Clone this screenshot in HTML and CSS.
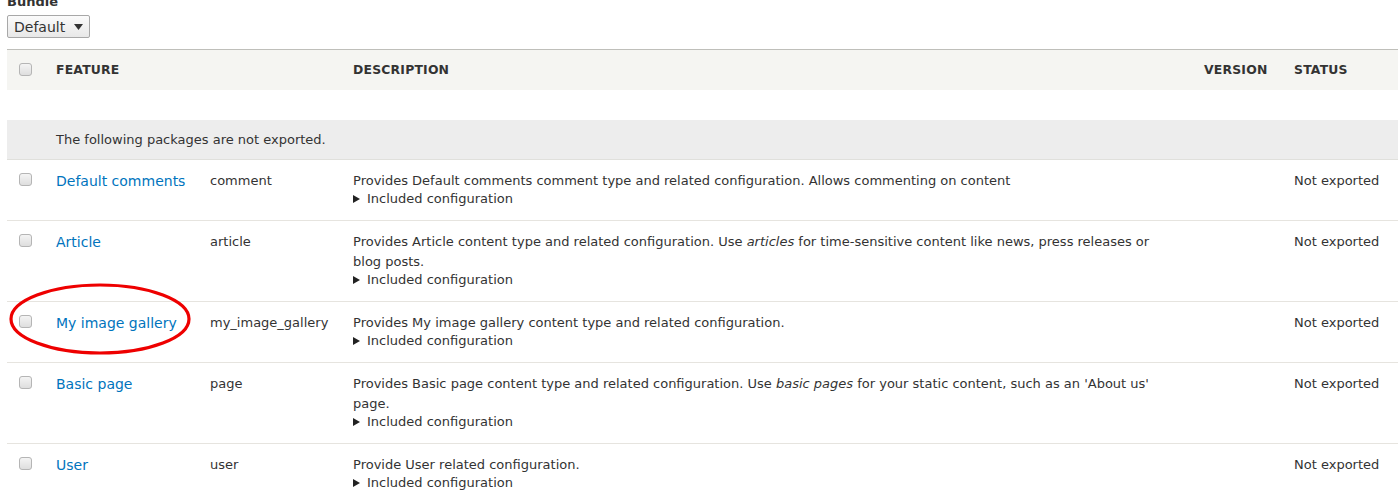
FILE: index.html
```html
<!DOCTYPE html>
<html>
<head>
<meta charset="utf-8">
<link rel="stylesheet" href="styles.css">
</head>
<body>
<div class="page">
  <div class="bundle">
    <label class="bundle-label">Bundle</label>
    <div class="select"><span>Default</span><svg class="arrow" width="9" height="6" viewBox="0 0 9 6"><path d="M0 0H9L4.5 6Z" fill="#333"/></svg></div>
  </div>
  <table class="features">
    <colgroup>
      <col class="c-check"><col class="c-feature"><col class="c-machine"><col class="c-desc"><col class="c-version"><col class="c-status">
    </colgroup>
    <thead>
      <tr>
        <th><input type="checkbox" class="cb"></th>
        <th colspan="2">Feature</th>
        <th>Description</th>
        <th>Version</th>
        <th>Status</th>
      </tr>
    </thead>
    <tbody>
      <tr class="spacer"><td colspan="6"></td></tr>
      <tr class="group"><td></td><td colspan="5">The following packages are not exported.</td></tr>
      <tr>
        <td><input type="checkbox" class="cb"></td>
        <td><a href="#">Default comments</a></td>
        <td>comment</td>
        <td><div class="desc">Provides Default comments comment type and related configuration. Allows commenting on content</div><div class="summary"><svg class="tri" width="7" height="8" viewBox="0 0 7 8"><path d="M0 0L7 4L0 8Z" fill="#222"/></svg>Included configuration</div></td>
        <td></td>
        <td>Not exported</td>
      </tr>
      <tr>
        <td><input type="checkbox" class="cb"></td>
        <td><a href="#">Article</a></td>
        <td>article</td>
        <td><div class="desc">Provides Article content type and related configuration. Use <em>articles</em> for time-sensitive content like news, press releases or blog posts.</div><div class="summary"><svg class="tri" width="7" height="8" viewBox="0 0 7 8"><path d="M0 0L7 4L0 8Z" fill="#222"/></svg>Included configuration</div></td>
        <td></td>
        <td>Not exported</td>
      </tr>
      <tr class="highlight">
        <td><input type="checkbox" class="cb"></td>
        <td><a href="#">My image gallery</a></td>
        <td>my_image_gallery</td>
        <td><div class="desc">Provides My image gallery content type and related configuration.</div><div class="summary"><svg class="tri" width="7" height="8" viewBox="0 0 7 8"><path d="M0 0L7 4L0 8Z" fill="#222"/></svg>Included configuration</div></td>
        <td></td>
        <td>Not exported</td>
      </tr>
      <tr>
        <td><input type="checkbox" class="cb"></td>
        <td><a href="#">Basic page</a></td>
        <td>page</td>
        <td><div class="desc">Provides Basic page content type and related configuration. Use <em>basic pages</em> for your static content, such as an 'About us' page.</div><div class="summary"><svg class="tri" width="7" height="8" viewBox="0 0 7 8"><path d="M0 0L7 4L0 8Z" fill="#222"/></svg>Included configuration</div></td>
        <td></td>
        <td>Not exported</td>
      </tr>
      <tr>
        <td><input type="checkbox" class="cb"></td>
        <td><a href="#">User</a></td>
        <td>user</td>
        <td><div class="desc">Provide User related configuration.</div><div class="summary"><svg class="tri" width="7" height="8" viewBox="0 0 7 8"><path d="M0 0L7 4L0 8Z" fill="#222"/></svg>Included configuration</div></td>
        <td></td>
        <td>Not exported</td>
      </tr>
    </tbody>
  </table>
  <svg class="circle" width="190" height="76" viewBox="0 0 190 76"><ellipse cx="95" cy="38" rx="89" ry="34" fill="none" stroke="#ee0000" stroke-width="3.2"/></svg>
</div>
</body>
</html>
```

FILE: styles.css
```css
html, body {
  margin: 0;
  padding: 0;
  background: #fff;
}
body {
  font-family: "DejaVu Sans", Verdana, sans-serif;
  font-size: 13px;
  color: #333;
  overflow: hidden;
}
.page {
  position: relative;
  padding-left: 7px;
  margin-top: -8px;
}
.bundle-label {
  display: block;
  font-weight: bold;
  line-height: 19px;
}
.select {
  margin-top: 4px;
  display: inline-flex;
  align-items: center;
  box-sizing: border-box;
  width: 83px;
  height: 23px;
  padding: 0 6px 0 6px;
  border: 1px solid #a8a8a8;
  border-radius: 2px;
  background: linear-gradient(#fbfbfb, #e8e8e8);
  font-size: 14px;
  color: #333;
  justify-content: space-between;
}
.select .arrow {
  margin-top: 1px;
}
.features {
  margin-top: 11px;
  width: 100%;
  border-collapse: collapse;
  table-layout: fixed;
}
.c-check { width: 37px; }
.c-feature { width: 154px; }
.c-machine { width: 143px; }
.c-desc { width: 851px; }
.c-version { width: 90px; }
.features thead tr {
  background: #f5f5f2;
  border-top: 1px solid #bfbfba;
}
.features th {
  box-sizing: border-box;
  height: 40px;
  padding: 0 12px 1px;
  text-align: left;
  font-size: 12.4px;
  font-weight: bold;
  text-transform: uppercase;
  vertical-align: middle;
  color: #333;
  letter-spacing: 0.2px;
}
.features th:first-child {
  padding-right: 0;
}
.features td {
  padding: 11px 12px 13px;
  vertical-align: top;
  line-height: 20px;
}
.features tbody tr {
  border-bottom: 1px solid #e6e4df;
}
.features tr.spacer {
  border-bottom: none;
}
.features tr.spacer td {
  height: 30px;
  padding: 0;
}
.features tr.group {
  background: #ededed;
  border-bottom: 1px solid #e0e0dc;
}
.features tr.group td {
  height: 39px;
  padding: 0 12px;
  vertical-align: middle;
  line-height: 19px;
}
.features td:first-child {
  padding-right: 0;
}
.cb {
  -webkit-appearance: none;
  appearance: none;
  display: block;
  box-sizing: border-box;
  width: 13px;
  height: 13px;
  margin: 2px 0 0;
  border: 1px solid #b5b5b5;
  border-radius: 3px;
  background: linear-gradient(#f4f4f4, #dedede);
}
th .cb {
  margin: 0;
}
a {
  color: #0074bd;
  text-decoration: none;
  font-size: 14px;
}
em {
  font-style: italic;
}
.summary {
  line-height: 17px;
  margin-top: -1px;
}
.tri {
  display: inline-block;
  margin-right: 7px;
  vertical-align: -0.5px;
}
.circle {
  position: absolute;
  left: 5px;
  top: 289px;
  pointer-events: none;
}
```
